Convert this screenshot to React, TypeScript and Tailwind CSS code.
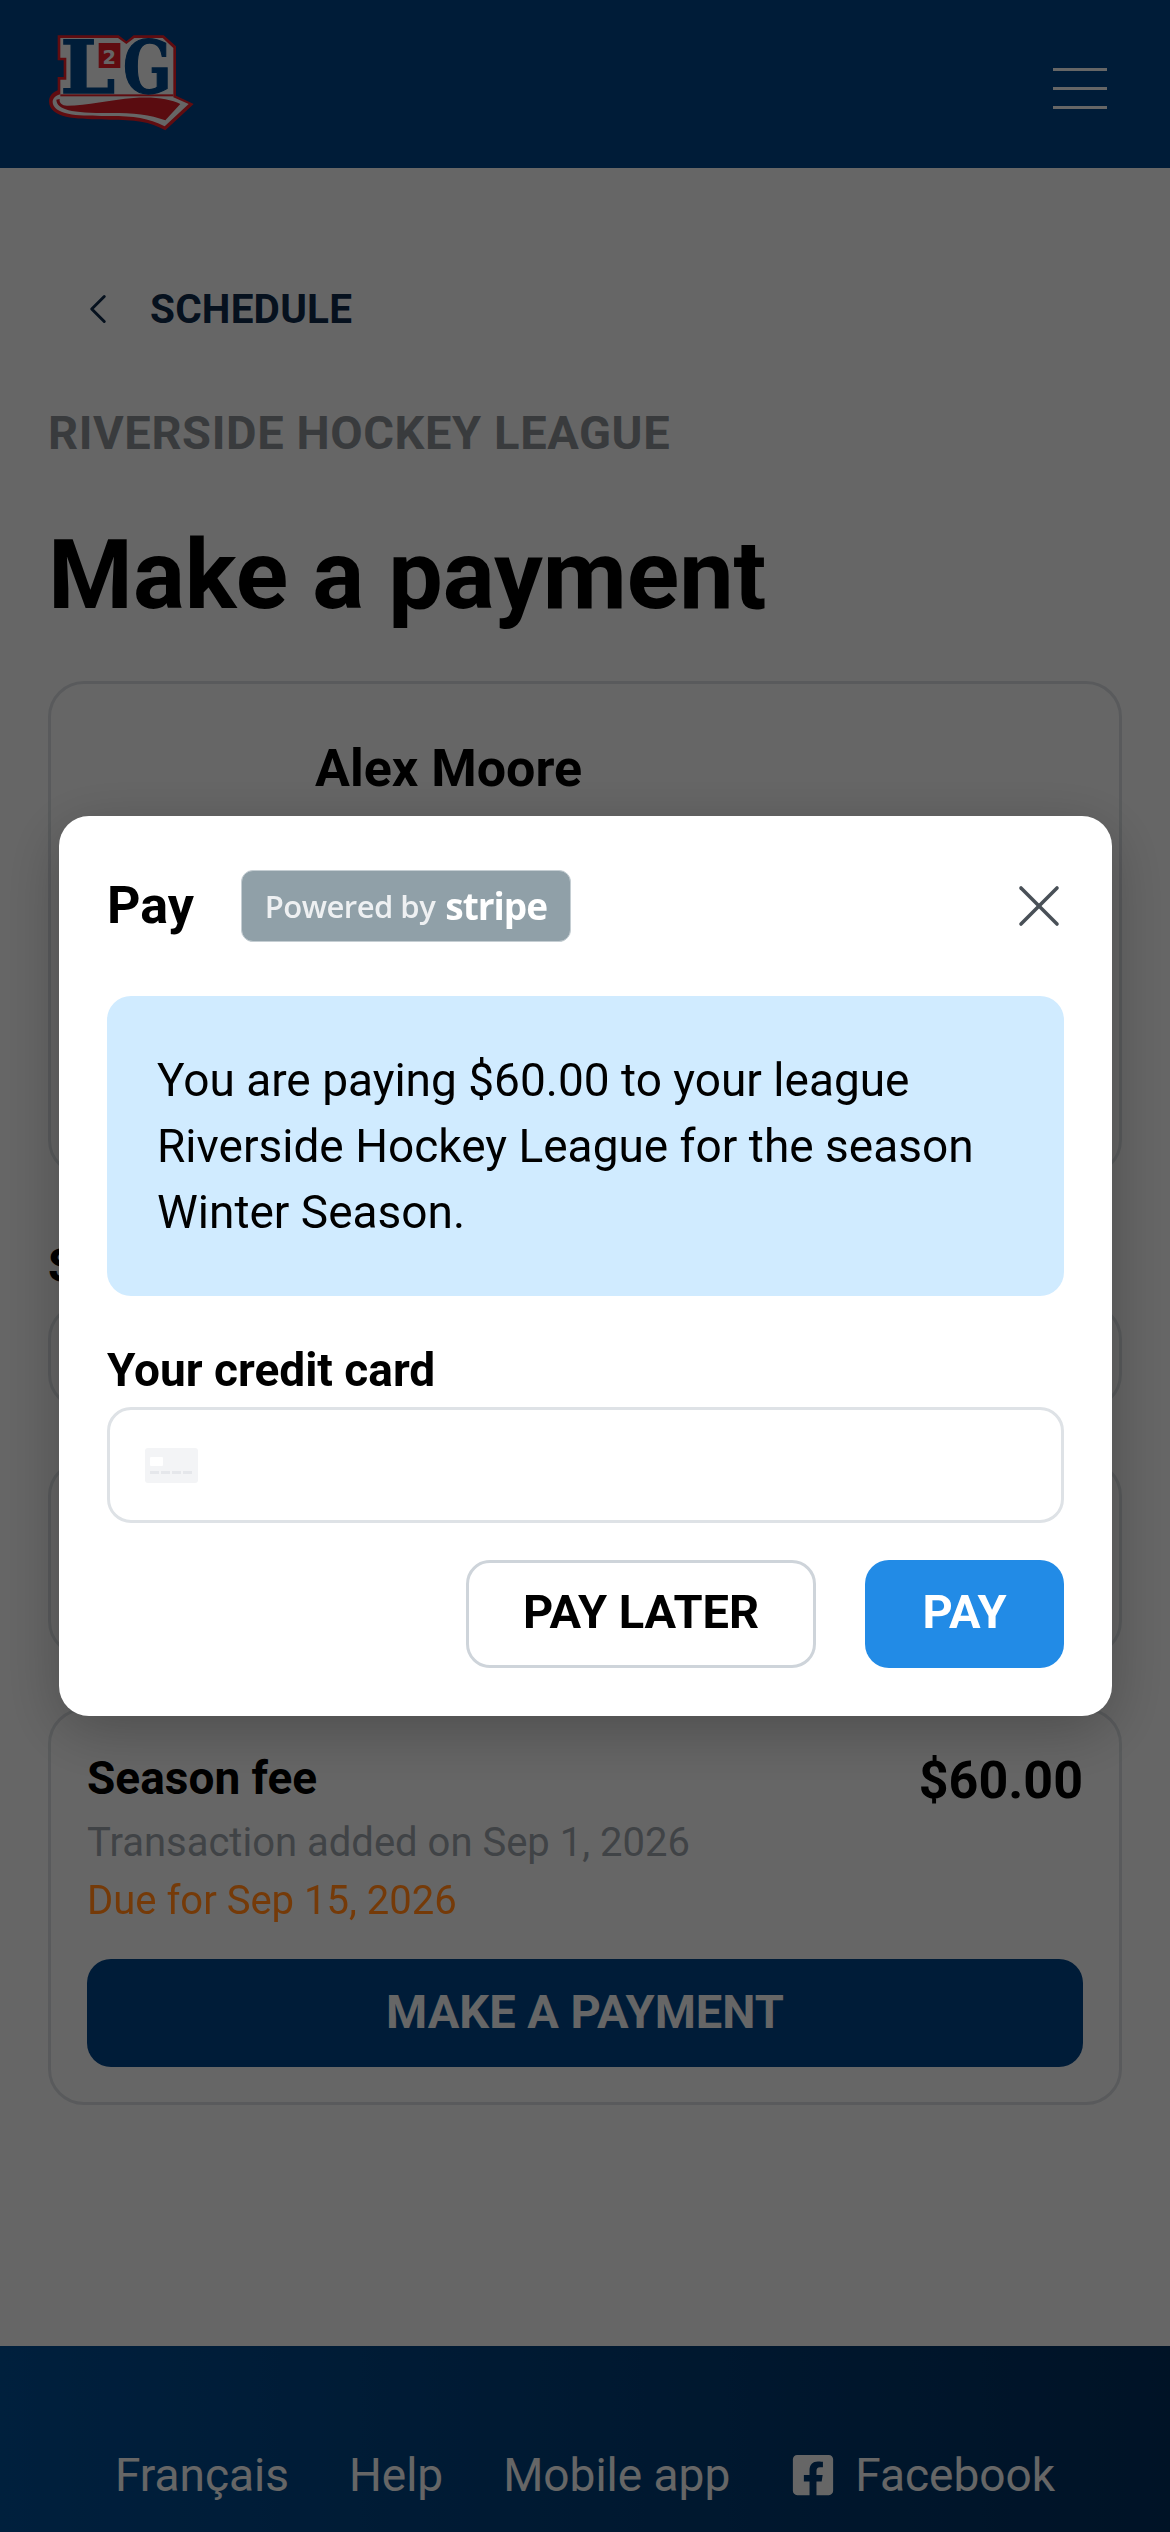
import { X, ChevronLeft } from 'lucide-react';
import { FaFacebookSquare } from 'react-icons/fa';

function Logo() {
  return (
    <svg viewBox="140 100 450 300" className="w-[150px] h-[100px] mb-[2px] overflow-visible">
      {/* outer outline */}
      <path
        d="M172 107 H355 L378 125 L400 107 H490 L527 140 V288 L580 313 L495 392 C450 365 400 360 330 360 C260 358 170 362 150 322 C140 300 150 280 172 272 V232 H190 V182 H172 Z"
        fill="#f0202a"
      />
      {/* white inset */}
      <path
        d="M180 115 H353 L378 133 L402 115 H487 L519 145 V293 L565 313 L493 380 C445 355 400 349 330 349 C260 347 180 352 160 318 C152 302 160 290 180 284 V240 H198 V174 H180 Z"
        fill="#ffffff"
      />
      {/* swoosh */}
      <path
        d="M168 300 C170 330 210 340 330 340 C400 340 450 345 495 362 L540 313 C510 298 460 290 400 295 C330 300 260 318 200 318 C185 318 176 310 178 298 Z"
        fill="#e21e28"
      />
      <path d="M186 306 C200 296 240 293 286 297 C250 306 205 316 186 306 Z" fill="#ffffff" />
      <rect x="180" y="284" width="339" height="6" fill="#f0202a" />
      {/* letters */}
      <text
        x="180"
        y="281"
        fontFamily="'DejaVu Serif', serif"
        fontWeight="700"
        fontSize="217"
        textLength="165"
        lengthAdjust="spacingAndGlyphs"
        fill="#004a8f"
        stroke="#004a8f"
        strokeWidth="4"
      >
        L
      </text>
      <text
        x="368"
        y="281"
        fontFamily="'DejaVu Serif', serif"
        fontWeight="700"
        fontSize="217"
        textLength="146"
        lengthAdjust="spacingAndGlyphs"
        fill="#004a8f"
        stroke="#004a8f"
        strokeWidth="4"
      >
        G
      </text>
      <rect x="295" y="130" width="65" height="75" fill="#f0202a" />
      <text
        x="327"
        y="192"
        textAnchor="middle"
        fontFamily="'DejaVu Sans', sans-serif"
        fontWeight="700"
        fontSize="58"
        fill="#ffffff"
      >
        2
      </text>
    </svg>
  );
}

function Overlay() {
  return (
    <div className="fixed inset-0 bg-black/60 flex items-center justify-center pl-[59px] pr-[58px] z-10">
      <div className="w-full bg-white rounded-[30px] shadow-[0_15px_60px_rgba(0,0,0,0.25)] px-[48px] py-[48px] flex flex-col">
        <div className="flex items-center justify-between h-[84px]">
          <div className="flex items-center gap-[47px]">
            <h2 className="text-[52px] leading-[60px] font-bold text-black">Pay</h2>
            <div className="w-[330px] h-[72px] rounded-[12px] bg-[#90a0a8] border border-[#c5ced3] flex items-center justify-center gap-[10px] text-white font-['Open_Sans',sans-serif]">
              <span className="text-[31px] font-semibold opacity-85 tracking-[-0.5px] blur-[0.5px]">Powered by</span>
              <span className="text-[37px] leading-[40px] font-bold tracking-[-1px] blur-[0.5px]">stripe</span>
            </div>
          </div>
          <button className="text-[#495057] mr-[-11px]">
            <X size={72} strokeWidth={1.2} />
          </button>
        </div>

        <div className="mt-[48px] bg-[#d0ebff] rounded-[24px] px-[50px] py-[51px] text-[46px] leading-[66px] text-black">
          You are paying $60.00 to your league Riverside Hockey League for the season Winter Season.
        </div>

        <label className="mt-[48px] text-[46px] leading-[52px] font-bold text-black">Your credit card</label>
        <div className="mt-[11px] h-[116px] rounded-[24px] border-[3px] border-[#dee2e6] flex items-center pl-[35px]">
          <svg viewBox="0 0 53 35" className="w-[53px] h-[35px]">
            <rect width="53" height="35" rx="3" fill="#f3f4f6" />
            <rect x="5" y="9" width="13" height="9" rx="1" fill="#ffffff" />
            <rect x="5" y="23" width="9" height="3" fill="#e5e7eb" />
            <rect x="16" y="23" width="9" height="3" fill="#e5e7eb" />
            <rect x="27" y="23" width="9" height="3" fill="#e5e7eb" />
            <rect x="38" y="23" width="9" height="3" fill="#e5e7eb" />
          </svg>
        </div>

        <div className="mt-[37px] flex justify-end gap-[49px]">
          <button className="w-[350px] h-[108px] rounded-[24px] border-[3px] border-[#ced4da] bg-white pb-[4px] text-[47px] font-bold text-black">
            PAY LATER
          </button>
          <button className="w-[199px] h-[108px] rounded-[24px] bg-[#228be6] pb-[4px] text-[47px] font-bold text-white">
            PAY
          </button>
        </div>
      </div>
    </div>
  );
}

export default function App() {
  return (
    <div className="min-h-screen flex flex-col bg-white font-['Roboto',sans-serif] relative">
      <header className="h-[168px] bg-[#00468c] flex items-center justify-between pl-[47px] pr-[63px] shrink-0">
        <Logo />
        <div className="flex flex-col gap-[16px] w-[54px] mt-[8px]">
          <span className="h-[3px] bg-white" />
          <span className="h-[3px] bg-white" />
          <span className="h-[3px] bg-white" />
        </div>
      </header>

      <main className="flex-1 px-[48px] pt-[113px]">
        {/* Back link */}
        <a className="flex items-center pl-[25px] gap-[27px] h-[56px] text-[#0f2c4d]">
          <ChevronLeft size={50} strokeWidth={1.44} />
          <span className="text-[40.5px] font-bold tracking-[0.2px]">SCHEDULE</span>
        </a>

        <p className="mt-[71px] text-[47px] leading-[50px] font-bold text-[#8e949a] tracking-[0.6px]">
          RIVERSIDE HOCKEY LEAGUE
        </p>
        <h1 className="mt-[61px] text-[97px] leading-[112px] font-bold text-black">Make a payment</h1>

        {/* Player card */}
        <div className="mt-[50px] h-[495px] rounded-[36px] border-[3px] border-[#dee2e6] pl-[264px] pt-[57px]">
          <p className="text-[52px] leading-[56px] font-bold text-black">Alex Moore</p>
        </div>

        <h3 className="mt-[62px] text-[48px] leading-[56px] font-bold text-black">Summary</h3>
        <div className="mt-[9px] h-[107px] rounded-[36px] border-[3px] border-[#dee2e6]" />
        <div className="mt-[50px] h-[197px] rounded-[36px] border-[3px] border-[#dee2e6]" />

        {/* Transaction card */}
        <div className="mt-[51px] rounded-[36px] border-[3px] border-[#dee2e6] px-[36px] pt-[40px] pb-[35px]">
          <div className="flex items-start justify-between">
            <p className="text-[46px] leading-[54px] font-bold text-black">Season fee</p>
            <p className="text-[52px] leading-[60px] font-bold text-black">$60.00</p>
          </div>
          <p className="mt-[3px] text-[40px] leading-[58px] text-[#a0a7ae]">Transaction added on Sep 1, 2026</p>
          {/* sits over the dim layer, the colour stays bright in the picture */}
          <p className="relative z-20 text-[40px] leading-[58px] text-[#753a08]">Due for Sep 15, 2026</p>
          <button className="mt-[29px] w-full h-[108px] rounded-[24px] bg-[#00468c] pb-[2px] text-[47px] font-bold text-white">
            MAKE A PAYMENT
          </button>
        </div>
      </main>

      <footer className="h-[186px] shrink-0 bg-gradient-to-r from-[#005099] to-[#003060] flex items-end justify-center gap-[60px] pb-[30px] text-[46px] leading-[54px] text-white">
        <a>Français</a>
        <a>Help</a>
        <a>Mobile app</a>
        <a className="flex items-center gap-[19px]">
          <FaFacebookSquare size={46} />
          Facebook
        </a>
      </footer>

      <Overlay />
    </div>
  );
}
